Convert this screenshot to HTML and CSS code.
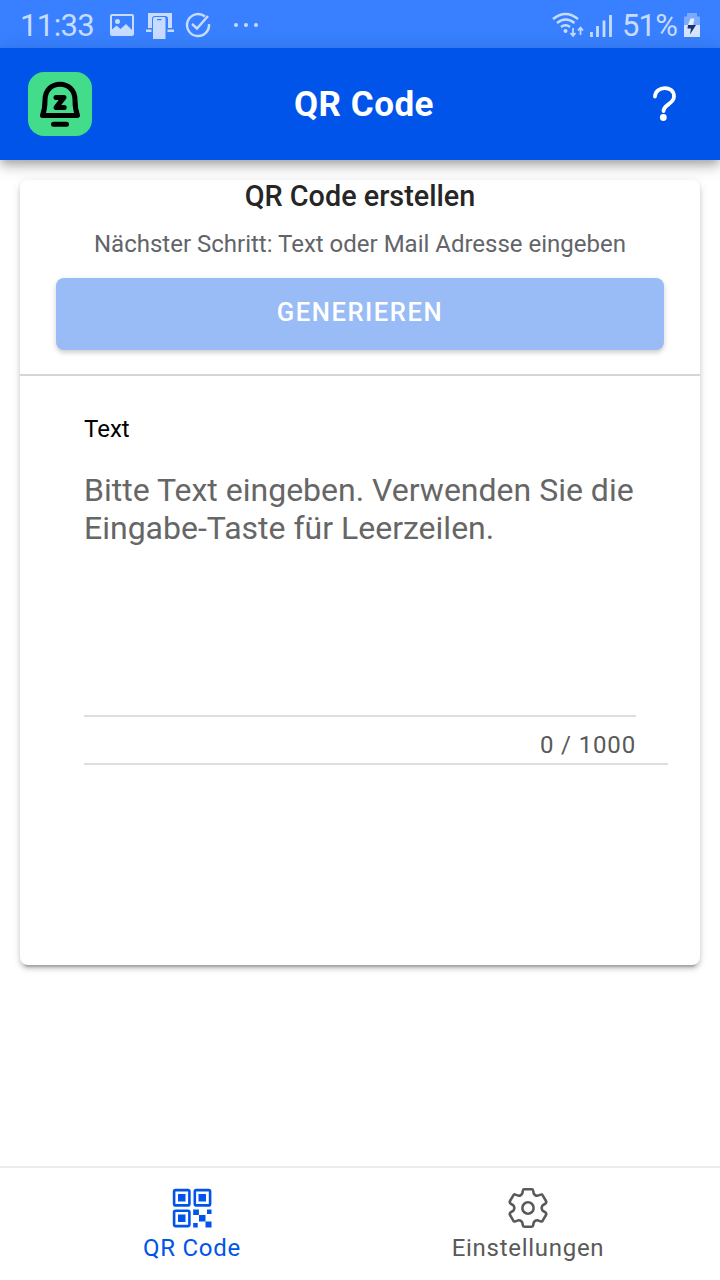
FILE: index.html
```html
<!DOCTYPE html>
<html lang="de">
<head>
<meta charset="utf-8">
<title>QR Code</title>
<link rel="stylesheet" href="styles.css">
</head>
<body>
<div class="app">
  <div class="status">
    <span class="status-time">11:33</span>
    <svg class="status-left" viewBox="110 0 160 48" fill="#c8dcff">
      <path fill-rule="evenodd" d="M112 14h20q2 0 2 2v18q0 2-2 2h-20q-2 0-2-2V16q0-2 2-2zM112 16v13.500l4.500-4 4 3.500 5.500-5 6 6V16z"/>
      <circle cx="117.500" cy="21.500" r="2.500"/>
      <path d="M148 13h24v15h-4v-9q0-3-3-3h-10q-3 0-3 3v9h-4zM146 29.500h5.500v2.500H146zM167.500 29.500h6.500v2.500h-6.500z"/>
      <path fill-rule="evenodd" d="M155 17h9q1.500 0 1.500 1.500V39H153V18.500q0-1.500 2-1.500zM157 19v1.200h4.500V19z"/>
      <path d="M205 16.500A11 11 0 1 0 209 24M192 24l5 4.500L208 16" fill="none" stroke="#c8dcff" stroke-width="2.400"/>
      <circle cx="236" cy="25" r="2"/><circle cx="246" cy="25" r="2"/><circle cx="256" cy="25" r="2"/>
    </svg>
    <svg class="status-signal" viewBox="550 0 66 48" fill="none" stroke="#c8dcff">
      <path d="M553 19Q565.500 9 578 19M557 23Q565.500 16 574.500 23M561 27Q565.500 23.500 570 27" stroke-width="2.300"/>
      <circle cx="565.500" cy="31" r="2" fill="#c8dcff" stroke="none"/>
      <path d="M573 28v7M570.500 33l2.500 3 2.500-3M580.500 35v-7M578 30.500l2.500-3 2.500 3" stroke-width="1.700"/>
      <path d="M591.500 32v5M597.500 26v11M604 20.500V37M610.500 15v22" stroke-width="2.800"/>
    </svg>
    <span class="status-percent">51%</span>
    <svg class="status-battery" viewBox="684 0 16 48">
      <path d="M687 13h10v3.500h3V25h-16v-8.500h3z" fill="#7babff"/>
      <path d="M684 25h16v12h-16z" fill="#d5e4ff"/>
      <path d="M690.500 18.500h4L693 25h-5z" fill="#e4eeff"/>
      <path d="M688 25h8l-6 9.500 1-6h-3.500z" fill="#17346e"/>
    </svg>
  </div>
  <header class="header">
    <svg class="logo" viewBox="0 0 64 64">
      <rect width="64" height="64" rx="16" fill="#42dc8b"/>
      <g class="logo-mark" fill="none" stroke="#000" stroke-linejoin="round" stroke-linecap="round">
        <path d="M17 28C17 7 47 7 47 28Q47 37 49.500 43.500H14.500Q17 37 17 28z" stroke-width="5"/>
        <path d="M28 25.400H36L28 35.600h8.200" stroke-width="5"/>
        <path d="M25.500 52.200h13" stroke-width="5"/>
      </g>
    </svg>
    <h1 class="title">QR Code</h1>
    <svg class="help" viewBox="0 0 28 40">
      <path d="M5 12.500C5.500 1.500 24 1 24 12.500C24 20 14 20 13.500 27" fill="none" stroke="#fff" stroke-width="3.800" stroke-linecap="round"/>
      <circle cx="13.300" cy="33.500" r="3.400" fill="#fff"/>
    </svg>
  </header>
  <main class="content">
    <section class="card">
      <div class="card-head">
        <h2 class="card-title">QR Code erstellen</h2>
        <p class="hint">Nächster Schritt: Text oder Mail Adresse eingeben</p>
        <button class="generate" disabled>GENERIEREN</button>
      </div>
      <div class="field">
        <div class="label">Text</div>
        <div class="entry">Bitte Text eingeben. Verwenden Sie die<br>Eingabe-Taste für Leerzeilen.</div>
        <div class="counter">0 / 1000</div>
      </div>
    </section>
  </main>
  <nav class="tabs">
    <div class="tab tab-active">
      <svg class="tab-icon" viewBox="0 0 40 40" fill="none" stroke="#0054e9" stroke-width="2.600">
        <rect x="2.100" y="2.100" width="15.300" height="15.300" rx="1.500"/>
        <rect x="22.800" y="2.100" width="15.300" height="15.300" rx="1.500"/>
        <rect x="2.100" y="22.800" width="15.300" height="15.300" rx="1.500"/>
        <path d="M6 6h7.500v7.500H6zM26.500 6H34v7.500h-7.500zM6 26.500h7.500V34H6zM21.200 21.500h5.700V27h-5.700zM35 21.500h4.500V26H35zM27 27h6.500v6.500H27zM21.200 35h4.500v4.500h-4.500zM33.500 33.500h6v6h-6z" fill="#0054e9" stroke="none"/>
      </svg>
      <span>QR Code</span>
    </div>
    <div class="tab">
      <svg class="tab-icon" viewBox="204 84 120 120" fill="none" stroke="#595959" stroke-width="7.600" stroke-linejoin="round">
        <path d="M253 88H275Q279 88 279.500 92L281 100Q285 108 293 107L302 104Q306 102 308 106L318 123Q320 127 317 130L308 136Q302 144 308 152L317 158Q320 161 318 165L308 182Q306 186 302 184L293 181Q285 180 281 188L279.500 196Q279 200 275 200H253Q249 200 248.500 196L247 188Q243 180 235 181L226 184Q222 186 220 182L210 165Q208 161 211 158L220 152Q226 144 220 136L211 130Q208 127 210 123L220 106Q222 102 226 104L235 107Q243 108 247 100L248.500 92Q249 88 253 88z"/>
        <circle cx="264" cy="144" r="17"/>
      </svg>
      <span>Einstellungen</span>
    </div>
  </nav>
</div>
</body>
</html>
```
FILE: styles.css
```css
* { box-sizing: border-box; }
body { margin: 0; font-family: Roboto, sans-serif; background: #fff; }
.app { width: 720px; height: 1280px; display: flex; flex-direction: column; overflow: hidden; }
.status { height: 48px; flex: none; background: #3880ff; display: flex; color: #c8dcff; font-size: 31px; line-height: 52px; padding-left: 20px; }
.status-time { width: 90px; letter-spacing: -0.6px; white-space: nowrap; }
.status-left { width: 160px; height: 48px; }
.status-signal { width: 66px; height: 48px; margin-left: 280px; }
.status-percent { width: 62px; margin-left: 6px; letter-spacing: -0.8px; white-space: nowrap; }
.status-battery { width: 16px; height: 48px; }
.header { height: 112px; flex: none; background: #0054e9; display: grid; grid-template-columns: 64px 1fr 28px; align-items: center; padding: 0 42px 0 28px; z-index: 1; box-shadow: 0 4px 8px -2px rgba(0,0,0,.2), 0 8px 10px 0 rgba(0,0,0,.14), 0 2px 20px 0 rgba(0,0,0,.12); }
.logo { width: 64px; height: 64px; }
.logo-mark { filter: blur(.6px); }
.title { margin: 0; padding-right: 14px; color: #fff; font-size: 35px; font-weight: 700; text-align: center; letter-spacing: .5px; }
.help { width: 28px; height: 40px; }
.content { flex: 1; padding: 20px; }
.card { height: 785px; border-radius: 8px; background: #fff; box-shadow: 0 6px 2px -4px rgba(0,0,0,.2), 0 4px 4px 0 rgba(0,0,0,.14), 0 2px 10px 0 rgba(0,0,0,.12); }
.card-head { height: 196px; border-bottom: 2px solid #d6d6d6; padding: 0 36px; text-align: center; }
.card-title { margin: 0; height: 32px; font-size: 28.8px; line-height: 32px; font-weight: 500; color: #262626; }
.hint { margin: 16px 0 0; height: 32px; font-size: 24px; line-height: 32px; color: #636469; white-space: nowrap; }
.generate { display: block; width: 100%; height: 72px; margin: 18px 0 0; padding: 0 0 4px; border: 0; border-radius: 8px; background: #99bbf6; color: #fff; font: 500 25.6px Roboto, sans-serif; letter-spacing: 1.54px; box-shadow: 0 3px 4px rgba(0,0,0,.15), 0 1px 8px rgba(0,0,0,.06); }
.field { margin: 0 32px 0 64px; height: 389px; border-bottom: 2px solid #dedede; padding-top: 38px; }
.label { font-size: 24px; line-height: 30px; color: #000; }
.entry { width: 552px; height: 273px; padding-top: 27px; border-bottom: 2px solid #dedede; font-size: 32px; line-height: 38px; color: #666; white-space: nowrap; }
.counter { width: 552px; padding-top: 12px; font-size: 24px; line-height: 32px; text-align: right; letter-spacing: .85px; color: #595959; }
.tabs { height: 114px; flex: none; border-top: 2px solid #ececec; display: grid; grid-template-columns: 1fr 1fr; padding: 0 24px; }
.tab { display: flex; flex-direction: column; align-items: center; padding-top: 20px; color: #595959; font-size: 24px; line-height: 32px; letter-spacing: .72px; gap: 4px; }
.tab-active { color: #0054e9; }
.tab-icon { width: 40px; height: 40px; }
```
